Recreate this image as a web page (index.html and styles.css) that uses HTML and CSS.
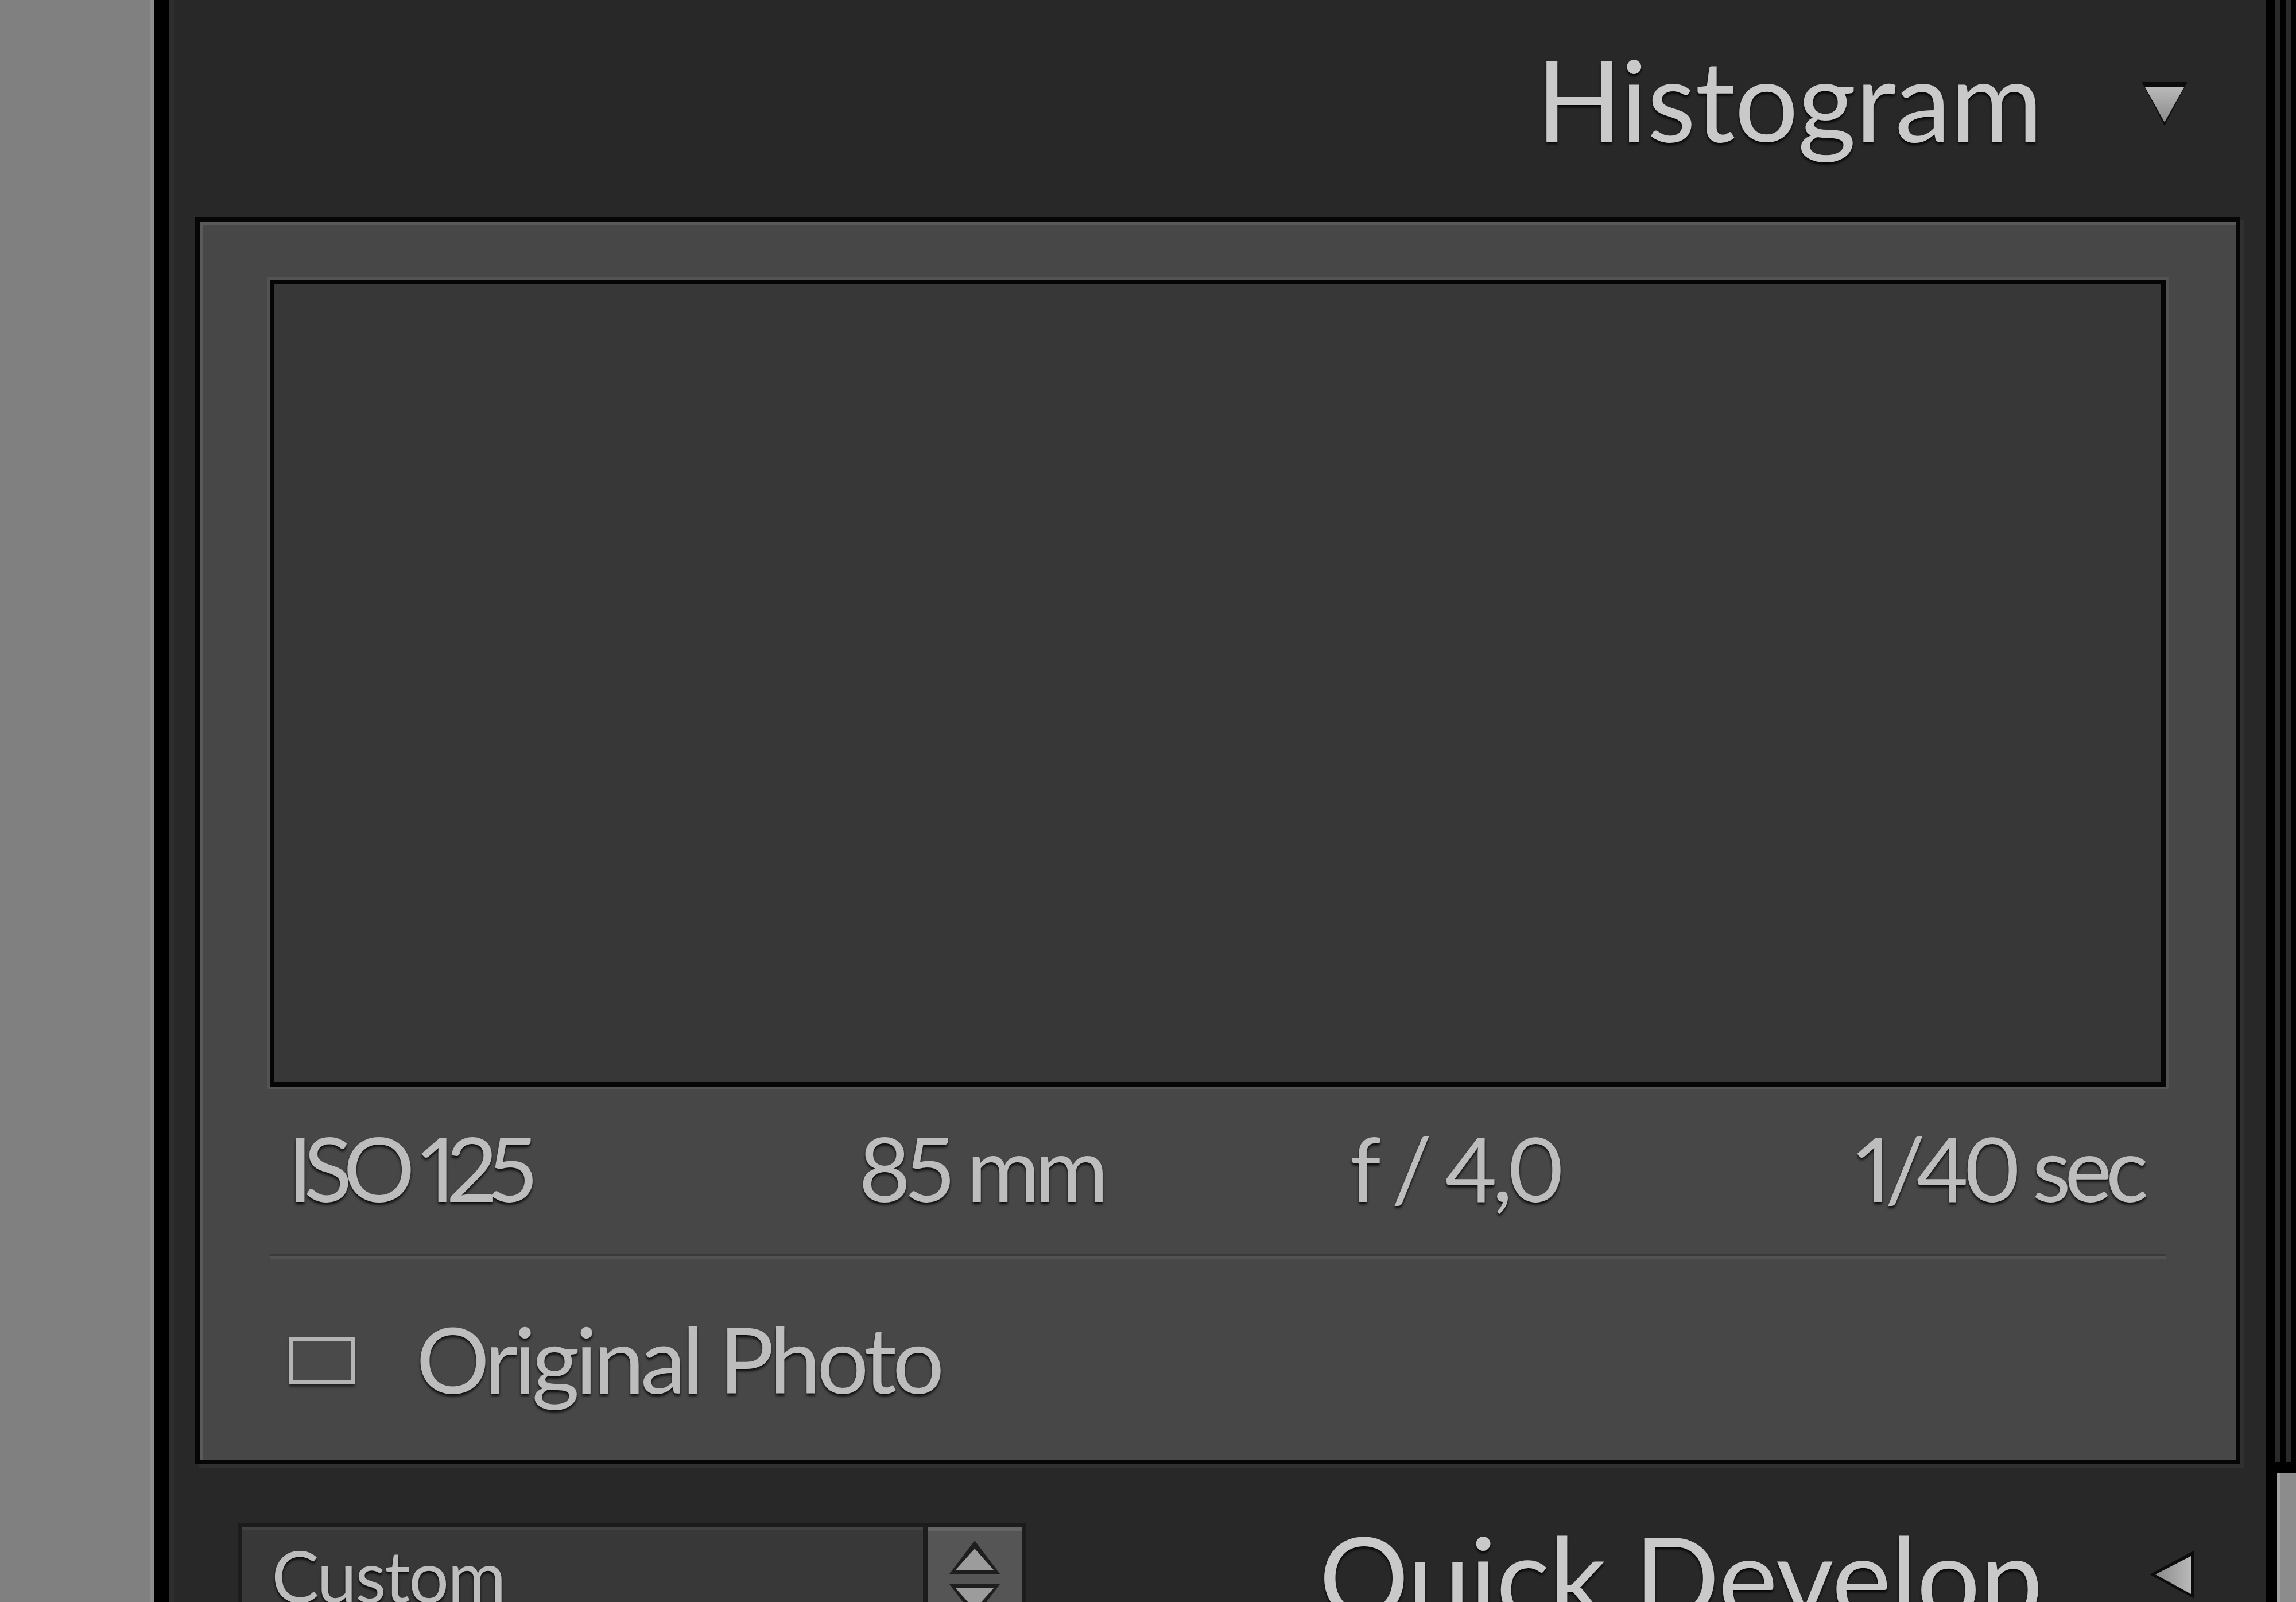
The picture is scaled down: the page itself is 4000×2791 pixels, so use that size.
FILE: index.html
```html
<!DOCTYPE html>
<html lang="en">
<head>
<meta charset="utf-8">
<title>Histogram panel</title>
<link rel="stylesheet" href="styles.css">
</head>
<body>
<div class="app">
  <div class="side"></div>
  <div class="panel">
    <div class="head head-top">
      <span class="title">Histogram</span>
      <svg class="tri tri-down" width="86" height="86" viewBox="0 0 86 86">
        <defs>
          <linearGradient id="gd" x1="0" y1="0" x2="0" y2="1">
            <stop offset="0" stop-color="#b9b9b9"/>
            <stop offset="1" stop-color="#8a8a8a"/>
          </linearGradient>
        </defs>
        <polygon points="3,5 83,5 43,82" fill="#0c0c0c"/>
        <polygon points="9,15 77,15 43,76" fill="url(#gd)"/>
      </svg>
    </div>
    <div class="hbox">
      <div class="graph"></div>
      <div class="stats">
        <span class="st st-iso">ISO 125</span>
        <span class="st st-mid">85 mm</span>
        <span class="st st-mid">f / 4,0</span>
        <span class="st st-sec">1/40 sec</span>
      </div>
      <div class="sep"></div>
      <div class="orig">
        <span class="cb"></span>
        <span class="orig-label">Original Photo</span>
      </div>
    </div>
    <div class="qd-row">
      <div class="preset">
        <span class="preset-label">Custom</span>
        <span class="spin">
          <svg width="100" height="130" viewBox="0 0 100 130">
            <polygon points="50,4 94,62 6,62" fill="#1e1e1e"/>
            <polygon points="50,18 84,56 16,56" fill="#9c9c9c"/>
            <polygon points="6,80 94,80 50,138" fill="#1e1e1e"/>
            <polygon points="16,86 84,86 50,124" fill="#9c9c9c"/>
          </svg>
        </span>
      </div>
      <div class="head head-qd">
        <span class="title">Quick Develop</span>
        <svg class="tri tri-left" width="86" height="88" viewBox="0 0 86 88">
          <defs>
            <linearGradient id="gl" x1="0" y1="0" x2="1" y2="0">
              <stop offset="0" stop-color="#8a8a8a"/>
              <stop offset="1" stop-color="#b9b9b9"/>
            </linearGradient>
          </defs>
          <polygon points="82,2 82,86 4,44" fill="#0c0c0c"/>
          <polygon points="76,12 76,78 14,44" fill="url(#gl)"/>
        </svg>
      </div>
    </div>
  </div>
  <div class="track"><div class="thumb"></div></div>
</div>
</body>
</html>
```
FILE: styles.css
```css
html, body {
  margin: 0;
  padding: 0;
  background: #282828;
}

.app {
  display: flex;
  width: 4000px;
  height: 2791px;
  overflow: hidden;
  font-family: Lato, "Open Sans", sans-serif;
}

.side {
  flex: none;
  width: 268px;
  background: #808080;
  box-shadow: inset -7px 0 0 #8d8d8d;
}

.panel {
  flex: 1;
  min-width: 0;
  background: #282828;
  border-left: 26px solid #000;
  box-shadow: inset 10px 0 0 #2e2e2e;
  padding: 0 44px 0 46px;
  display: flex;
  flex-direction: column;
}

.panel > * {
  flex: none;
}

.title {
  font-size: 196px;
  line-height: 1.2;
  color: #c9c9c9;
  letter-spacing: -1px;
  text-shadow: 0 4px 4px rgba(0, 0, 0, 0.85);
  white-space: nowrap;
}

.head {
  display: flex;
  align-items: flex-start;
}

.head-top {
  height: 378px;
  box-sizing: border-box;
  justify-content: flex-end;
  padding-top: 54px;
  padding-right: 89px;
}

.head-top .title {
  margin-right: 170px;
}

.tri-down {
  margin-top: 83px;
  flex: none;
}

.hbox {
  height: 2173px;
  box-sizing: border-box;
  border: 8px solid #060606;
  background: #474747;
  box-shadow: inset 6px 6px 0 #5a5a5a, 6px 6px 0 #303030;
  padding: 101px 122px 0 122px;
  display: flex;
  flex-direction: column;
}

.hbox > * {
  flex: none;
}

.graph {
  height: 1406px;
  box-sizing: border-box;
  border: 8px solid #050505;
  background: #373737;
  box-shadow: 0 0 0 5px #535353;
}

.stats {
  display: grid;
  grid-template-columns: repeat(4, 1fr);
  margin-top: 47px;
  font-size: 156px;
  line-height: 1.2;
  color: #bdbdbd;
  letter-spacing: -0.06em;
  font-variant-numeric: proportional-nums;
  text-shadow: 0 4px 4px rgba(0, 0, 0, 0.8);
  white-space: nowrap;
}

.st-iso {
  justify-self: start;
  padding-left: 31px;
  letter-spacing: -0.1em;
}

.st-mid {
  justify-self: center;
}

.st-sec {
  justify-self: end;
  padding-right: 41px;
  letter-spacing: -0.07em;
}

.sep {
  margin-top: 57px;
  height: 5px;
  background: #393939;
  border-bottom: 4px solid #525252;
}

.orig {
  display: flex;
  align-items: center;
  margin-top: 79px;
  height: 187px;
}

.cb {
  flex: none;
  width: 114px;
  height: 82px;
  margin-left: 34px;
  margin-top: 10px;
  box-sizing: border-box;
  border: 7px solid #b4b4b4;
  background: #4a4a4a;
  box-shadow: 0 4px 4px rgba(0, 0, 0, 0.5);
}

.orig-label {
  margin-left: 107px;
  font-size: 160px;
  line-height: 1.2;
  color: #bdbdbd;
  letter-spacing: -0.045em;
  text-shadow: 0 4px 4px rgba(0, 0, 0, 0.8);
  white-space: nowrap;
}

.qd-row {
  display: flex;
  align-items: flex-start;
}

.preset {
  flex: none;
  display: flex;
  align-items: flex-start;
  width: 1374px;
  height: 320px;
  box-sizing: border-box;
  margin-left: 74px;
  margin-top: 102px;
  border: 8px solid #1c1c1c;
  background: #383838;
  box-shadow: inset 0 4px 0 #424242;
}

.preset-label {
  padding-left: 51px;
  padding-top: 9px;
  font-size: 124px;
  line-height: 1.2;
  color: #bdbdbd;
  letter-spacing: -0.02em;
  text-shadow: 0 4px 4px rgba(0, 0, 0, 0.8);
}

.spin {
  margin-left: auto;
  flex: none;
  width: 172px;
  height: 100%;
  box-sizing: border-box;
  border-left: 8px solid #1c1c1c;
  background: #555;
  box-shadow: inset 0 6px 0 #666;
  display: flex;
  justify-content: center;
  padding-top: 19px;
}

.head-qd {
  margin-left: auto;
  margin-top: 76px;
  margin-right: 76px;
}

.head-qd .title {
  margin-right: 183px;
}

.tri-left {
  margin-top: 72px;
  flex: none;
}

.track {
  flex: none;
  width: 53px;
  height: 2791px;
  box-sizing: border-box;
  padding-top: 2547px;
  background: linear-gradient(to right,
    #000 0 16px, #2a2a2a 16px 25px, #000 25px 35px,
    #2a2a2a 35px 45px, #000 45px 53px);
  background-size: 53px 2547px;
  background-repeat: no-repeat;
  background-color: #000;
}

.thumb {
  margin-top: 20px;
  margin-left: 20px;
  height: 300px;
  background: linear-gradient(to right, #a3a3a3 0 5px, #8c8c8c 5px);
}
```
